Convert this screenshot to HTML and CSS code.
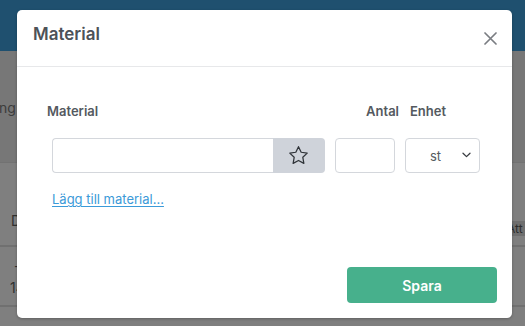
FILE: index.html
```html
<!DOCTYPE html>
<html lang="sv">
<head>
<meta charset="utf-8">
<link rel="stylesheet" href="styles.css">
</head>
<body>
<div class="page">
  <div class="topbar"></div>
  <div class="toolbar"><span class="crumb">ng</span></div>
  <div class="table-head">
    <span class="th-left">D</span>
    <span class="th-right">Att</span>
  </div>
  <div class="table-row">
    <div class="cell">
      <span class="dash">-</span>
      <span class="num">14</span>
    </div>
  </div>
  <div class="table-rest"></div>
</div>

<div class="modal">
  <div class="modal-header">
    <h1 class="modal-title">Material</h1>
    <button class="close" aria-label="Stäng">
      <svg width="13" height="13" viewBox="0 0 13 13"><path d="M1 1L12 12M12 1L1 12" stroke="#7a7d82" stroke-width="1.7" fill="none" stroke-linecap="round"/></svg>
    </button>
  </div>
  <div class="modal-body">
    <div class="form-grid">
      <label class="lbl lbl-material">Material</label>
      <label class="lbl lbl-antal">Antal</label>
      <label class="lbl lbl-enhet">Enhet</label>
      <div class="material-group">
        <input class="inp inp-material" type="text">
        <button class="star-btn" aria-label="Favorit">
          <svg width="23" height="23" viewBox="0 0 24 24"><path d="M12 2.8l2.8 5.8 6.3.9-4.6 4.4 1.1 6.3L12 17.2l-5.6 3 1.1-6.3-4.6-4.4 6.3-.9z" fill="none" stroke="#2f3338" stroke-width="1.3" stroke-linejoin="round"/></svg>
        </button>
      </div>
      <input class="inp inp-antal" type="text">
      <div class="select">
        <span class="select-val">st</span>
        <svg class="chev" width="9" height="6" viewBox="0 0 9 6"><path d="M1 1.2l3.5 3.4L8 1.2" fill="none" stroke="#3a3d42" stroke-width="1.3" stroke-linecap="round" stroke-linejoin="round"/></svg>
      </div>
    </div>
    <a class="add-link" href="#">Lägg till material...</a>
  </div>
  <div class="modal-footer">
    <button class="save">Spara</button>
  </div>
</div>
</body>
</html>
```
FILE: styles.css
```css
* { box-sizing: border-box; }
html, body { margin: 0; padding: 0; }
body {
  width: 525px;
  height: 326px;
  overflow: hidden;
  position: relative;
  font-family: Inter, "Liberation Sans", sans-serif;
  background: #7f7f7f;
}
.page { display: flex; flex-direction: column; height: 326px; }
.topbar { height: 51px; background: #1f506f; }
.toolbar {
  height: 111px;
  background: #777777;
  display: flex;
  align-items: flex-start;
  padding-top: 49px;
}
.crumb { font-size: 14px; line-height: 16px; color: #3c3c3c; margin-left: -1px; }
.table-head {
  height: 85px;
  background: #7f7f7f;
  border-top: 1px solid #727272;
  border-bottom: 2px solid #707070;
  display: flex;
  justify-content: space-between;
  align-items: flex-start;
  padding-top: 50px;
}
.th-left { font-size: 14px; color: #303030; margin-left: 11px; line-height: 16px; }
.th-right {
  background: #6e6e6e;
  color: #2d2d2d;
  font-size: 12px;
  line-height: 15px;
  height: 15px;
  width: 15px;
  overflow: hidden;
  white-space: nowrap;
  margin-top: 8px;
  text-indent: -3px;
}
.table-row {
  height: 60px;
  border-bottom: 2px solid #707070;
}
.cell { display: flex; flex-direction: column; padding-left: 10px; padding-top: 8px; color: #303030; font-size: 14px; line-height: 22px; }
.dash { margin-left: 4px; }
.table-rest { flex: 1; }

.modal {
  position: absolute;
  left: 17px;
  top: 10px;
  width: 495px;
  height: 308px;
  background: #ffffff;
  border-radius: 5px;
  display: flex;
  flex-direction: column;
  box-shadow: 0 1px 3px rgba(0,0,0,0.25);
}
.modal-header {
  height: 57px;
  border-bottom: 1px solid #e7e8ea;
  display: flex;
  justify-content: space-between;
  align-items: flex-start;
  padding: 14px 15px 0 16px;
}
.modal-title {
  margin: 0;
  font-size: 17px;
  line-height: 20px;
  font-weight: 600;
  color: #4d5258;
}
.close {
  border: 0;
  background: none;
  padding: 0;
  margin-top: 8px;
  width: 13px;
  height: 13px;
  display: block;
}
.close svg { display: block; }
.modal-body {
  flex: 1;
  padding: 36px 0 0 35px;
  display: flex;
  flex-direction: column;
  align-items: flex-start;
}
.form-grid {
  display: grid;
  grid-template-columns: 273px 60px 75px;
  column-gap: 10px;
  row-gap: 19px;
}
.lbl {
  font-size: 13px;
  line-height: 16px;
  font-weight: 600;
  color: #545960;
}
.lbl-material { margin-left: -5px; }
.lbl-antal { justify-self: end; margin-right: -4px; }
.lbl-enhet { margin-left: 5px; }
.material-group { display: flex; height: 35px; }
.inp {
  height: 35px;
  border: 1px solid #d4d7dc;
  border-radius: 4px;
  font: inherit;
  outline: none;
  background: #fff;
  padding: 0 8px;
}
.inp-material {
  flex: 1;
  min-width: 0;
  border-right: 0;
  border-radius: 4px 0 0 4px;
}
.star-btn {
  width: 52px;
  height: 35px;
  border: 0;
  border-radius: 0 4px 4px 0;
  background: #cfd3da;
  display: flex;
  align-items: center;
  justify-content: center;
  padding: 0;
}
.star-btn svg { display: block; margin-left: -1px; }
.inp-antal { width: 60px; }
.select {
  height: 35px;
  border: 1px solid #d4d7dc;
  border-radius: 4px;
  display: flex;
  align-items: center;
  padding-left: 24px;
}
.select-val { font-size: 13px; color: #555a60; width: 32px; }
.chev { display: block; margin-top: -2px; }
.add-link {
  margin-top: 18px;
  font-size: 13px;
  line-height: 16px;
  color: #3b9ad8;
  text-decoration: underline;
  text-underline-offset: 2px;
}
.modal-footer {
  display: flex;
  justify-content: flex-end;
  padding: 0 15px 15px 0;
}
.save {
  width: 150px;
  height: 36px;
  border: 0;
  border-radius: 4px;
  background: #47b08c;
  color: #ffffff;
  font-family: inherit;
  font-size: 14px;
  font-weight: 600;
}
```
